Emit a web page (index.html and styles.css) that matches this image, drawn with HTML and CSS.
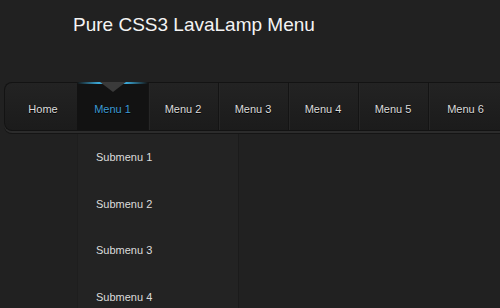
FILE: index.html
```html
<!DOCTYPE html>
<html lang="en">
<head>
    <meta charset="UTF-8">
    <title>Pure CSS3 LavaLamp Menu</title>
    <link rel="stylesheet" href="styles.css">
</head>
<body>
    <h1>Pure CSS3 LavaLamp Menu</h1>

    <nav class="menu-wrap">
        <ul class="lavalamp">
            <li class="item first"><a href="#">Home</a></li>
            <li class="item active">
                <span class="lamp"></span>
                <a href="#">Menu 1</a>
            </li>
            <li class="item sep"><a href="#">Menu 2</a></li>
            <li class="item sep"><a href="#">Menu 3</a></li>
            <li class="item sep"><a href="#">Menu 4</a></li>
            <li class="item sep"><a href="#">Menu 5</a></li>
            <li class="item sep last"><a href="#">Menu 6</a></li>
        </ul>
        <ul class="submenu">
            <li><a href="#">Submenu 1</a></li>
            <li><a href="#">Submenu 2</a></li>
            <li><a href="#">Submenu 3</a></li>
            <li><a href="#">Submenu 4</a></li>
        </ul>
    </nav>
</body>
</html>
```

FILE: styles.css
```css
html, body {
    height: 100%;
}

body {
    margin: 0;
    background-color: #212121;
    font-family: "Liberation Sans", Arial, sans-serif;
}

h1 {
    margin: 0;
    padding: 14px 0 0 73px;
    height: 70px;
    box-sizing: border-box;
    font-size: 19px;
    font-weight: normal;
    color: #f4f4f4;
}

.menu-wrap {
    position: relative;
    padding: 12px 0 0 4px;
}

.lavalamp {
    list-style: none;
    margin: 0;
    padding: 0;
    display: flex;
    height: 47px;
    background-color: #1d1d1d;
    background-image: linear-gradient(#232323, #1b1b1b);
    border: 1px solid #131313;
    border-right: none;
    border-radius: 8px 0 0 8px;
    box-shadow: 0 2px 0 #2c2c2c, 0 3px 0 #151515;
}

.item {
    position: relative;
    box-sizing: border-box;
    width: 70px;
    flex: none;
}

.item.first {
    width: 72px;
    padding-left: 4px;
}

.item.active {
    width: 71px;
    background-color: #121212;
}

.item.last {
    flex: 1;
    padding-left: 3px;
}

.item.sep {
    border-left: 1px solid #141414;
    box-shadow: inset 1px 0 0 #262626;
}

.item > a {
    display: block;
    height: 47px;
    line-height: 53px;
    text-align: center;
    font-size: 11px;
    color: #dcdcdc;
    text-decoration: none;
    text-shadow: 0 1px 0 #000;
}

.item.sep > a {
    margin-left: -1px;
}

.item.active > a {
    color: #3d9bd4;
}

.lamp {
    position: absolute;
    top: -1px;
    left: 0;
    right: 0;
    height: 2px;
    background: linear-gradient(90deg, rgba(40,150,200,0), #3aa7d6 30%, #3aa7d6 70%, rgba(40,150,200,0));
}

.lamp::after {
    content: "";
    position: absolute;
    top: 0;
    left: 50%;
    margin-left: -13px;
    border-left: 13px solid transparent;
    border-right: 13px solid transparent;
    border-top: 10px solid #3a3a3a;
}

.submenu {
    list-style: none;
    margin: 3px 0 0 73px;
    padding: 0;
    width: 160px;
    background-color: #232323;
    border-right: 1px solid #1b1b1b;
    border-left: 1px solid #1e1e1e;
}

.submenu li a {
    display: block;
    height: 46.7px;
    line-height: 47px;
    padding-left: 18px;
    font-size: 11px;
    color: #dcdcdc;
    text-decoration: none;
}
```
